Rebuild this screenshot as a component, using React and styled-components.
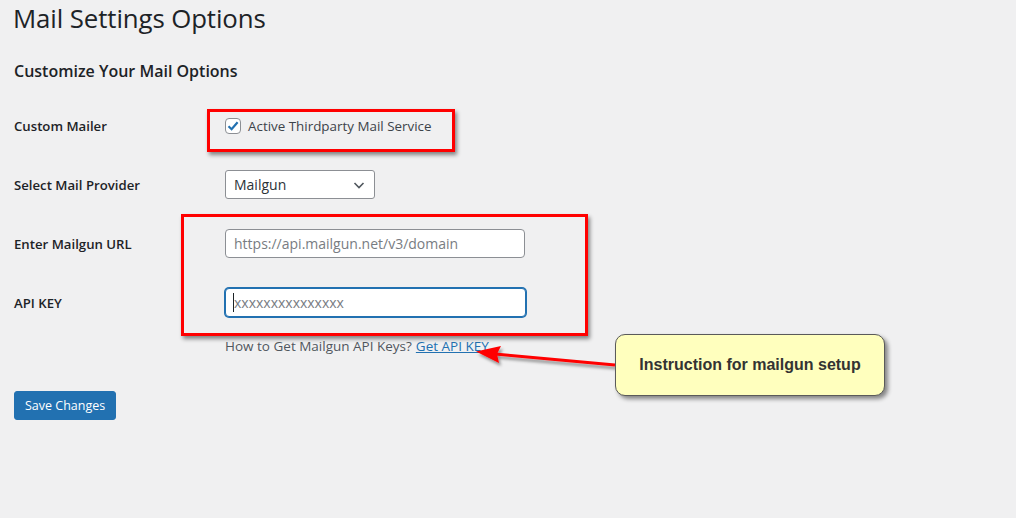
import React from "react";
import styled, { createGlobalStyle } from "styled-components";

const GlobalStyle = createGlobalStyle`
    html, body {
        margin: 0;
        padding: 0;
        background: #f0f0f1;
    }
    body {
        font-family: "Open Sans", "Noto Sans", sans-serif;
        color: #1d2327;
        font-size: 14px;
    }
`;

const Page = styled.div`
    position: relative;
    width: 1016px;
    height: 518px;
    padding: 0 14px;
    box-sizing: border-box;
    overflow: hidden;
`;

const Title = styled.h1`
    margin: 0 0 0 -1px;
    padding-top: 2px;
    font-size: 25.8px;
    font-weight: 500;
    line-height: 32px;
    letter-spacing: -0.1px;
`;

const SubTitle = styled.h2`
    margin: 24px 0 0;
    font-size: 16px;
    font-weight: 600;
    line-height: 26px;
`;

const Form = styled.div`
    display: grid;
    grid-template-columns: 211px 1fr;
    grid-template-rows: repeat(4, 59px) 28px;
    margin-top: 12px;
`;

const Label = styled.div`
    display: flex;
    align-items: center;
    font-weight: 600;
    font-size: 13.2px;
`;

const Field = styled.div`
    display: flex;
    align-items: center;
`;

const CheckLabel = styled.label`
    display: flex;
    align-items: center;
    gap: 7px;
    font-size: 13.4px;
    color: #3c434a;
`;

const Box = styled.span`
    width: 16px;
    height: 16px;
    box-sizing: border-box;
    border: 1px solid #8c8f94;
    border-radius: 4px;
    background: #fff;
    display: flex;
    align-items: center;
    justify-content: center;
`;

const Select = styled.div`
    width: 150px;
    height: 29px;
    box-sizing: border-box;
    border: 1px solid #8c8f94;
    border-radius: 3px;
    background: #fff;
    display: flex;
    align-items: center;
    justify-content: space-between;
    padding: 0 8px;
    font-size: 14px;
    color: #2c3338;
`;

const Input = styled.input`
    width: ${p => p.$width || 300}px;
    height: 29px;
    box-sizing: border-box;
    border: 1px solid ${p => (p.$focus ? "#2271b1" : "#8c8f94")};
    box-shadow: ${p => (p.$focus ? "0 0 0 1px #2271b1" : "none")};
    border-radius: 4px;
    background: #fff;
    padding: 0 8px;
    font-family: inherit;
    font-size: 14px;
    outline: none;
    &::placeholder {
        color: #787c82;
    }
`;

const CaretWrap = styled.div`
    position: relative;
    &::before {
        content: "";
        position: absolute;
        left: 8px;
        top: 5px;
        width: 1px;
        height: 19px;
        background: #1d2327;
    }
`;

const HelpRow = styled.div`
    grid-column: 2;
    display: flex;
    align-items: flex-end;
    line-height: 28px;
    color: #50575e;
    font-size: 13.5px;
    a {
        color: #2271b1;
        text-decoration: underline;
        margin-left: 4px;
    }
`;

const Spacer = styled.div``;

const Button = styled.button`
    margin-top: 31px;
    height: 29px;
    padding: 0 10px;
    background: #2271b1;
    border: 1px solid #2271b1;
    border-radius: 3px;
    color: #fff;
    font-family: inherit;
    font-size: 12.5px;
`;

const Highlight = styled.div`
    position: absolute;
    box-sizing: border-box;
    border: 3px solid #ff0000;
    box-shadow: 2px 3px 4px rgba(0, 0, 0, 0.45);
    pointer-events: none;
`;

const Callout = styled.div`
    position: absolute;
    left: 615px;
    top: 334px;
    width: 270px;
    height: 62px;
    box-sizing: border-box;
    background: #ffffbe;
    border: 1px solid #5a5a5a;
    border-radius: 10px;
    box-shadow: 3px 3px 4px rgba(0, 0, 0, 0.45);
    display: flex;
    align-items: center;
    justify-content: center;
    font-family: "Liberation Sans", Arial, sans-serif;
    font-weight: 700;
    font-size: 16px;
    color: #333;
`;

const Arrow = styled.svg`
    position: absolute;
    left: 470px;
    top: 340px;
    overflow: visible;
`;

export default function App() {
    return (
        <Page>
            <GlobalStyle />
            <Title>Mail Settings Options</Title>
            <SubTitle>Customize Your Mail Options</SubTitle>
            <Form>
                <Label>Custom Mailer</Label>
                <Field>
                    <CheckLabel>
                        <Box>
                            <svg width="14" height="14" viewBox="0 0 14 14">
                                <path d="M2.5 7.2 L5.6 10.2 L11.6 3.2" fill="none" stroke="#2271b1" strokeWidth="2.2" />
                            </svg>
                        </Box>
                        Active Thirdparty Mail Service
                    </CheckLabel>
                </Field>

                <Label>Select Mail Provider</Label>
                <Field>
                    <Select>
                        Mailgun
                        <svg width="14" height="14" viewBox="0 0 14 14">
                            <path d="M2.5 5 L7 9.5 L11.5 5" fill="none" stroke="#50575e" strokeWidth="1.6" />
                        </svg>
                    </Select>
                </Field>

                <Label>Enter Mailgun URL</Label>
                <Field>
                    <Input placeholder="https://api.mailgun.net/v3/domain" />
                </Field>

                <Label>API KEY</Label>
                <Field>
                    <CaretWrap>
                        <Input $focus $width={301} placeholder="xxxxxxxxxxxxxxx" />
                    </CaretWrap>
                </Field>

                <Spacer />
                <HelpRow>
                    How to Get Mailgun API Keys?<a href="#">Get API KEY</a>
                </HelpRow>
            </Form>
            <Button>Save Changes</Button>

            <Highlight style={{ left: 207, top: 109, width: 248, height: 43 }} />
            <Highlight style={{ left: 181, top: 214, width: 407, height: 122 }} />

            <Arrow width="150" height="30">
                <defs>
                    <filter id="sh" x="-20%" y="-50%" width="140%" height="200%">
                        <feDropShadow dx="2" dy="3" stdDeviation="1.5" floodColor="#000" floodOpacity="0.4" />
                    </filter>
                </defs>
                <g filter="url(#sh)">
                    <line x1="145" y1="25" x2="25" y2="14" stroke="#ff0000" strokeWidth="3" />
                    <path d="M6 11.5 L31 6 L27 14 L29 23 Z" fill="#ff0000" />
                </g>
            </Arrow>

            <Callout>Instruction for mailgun setup</Callout>
        </Page>
    );
}
